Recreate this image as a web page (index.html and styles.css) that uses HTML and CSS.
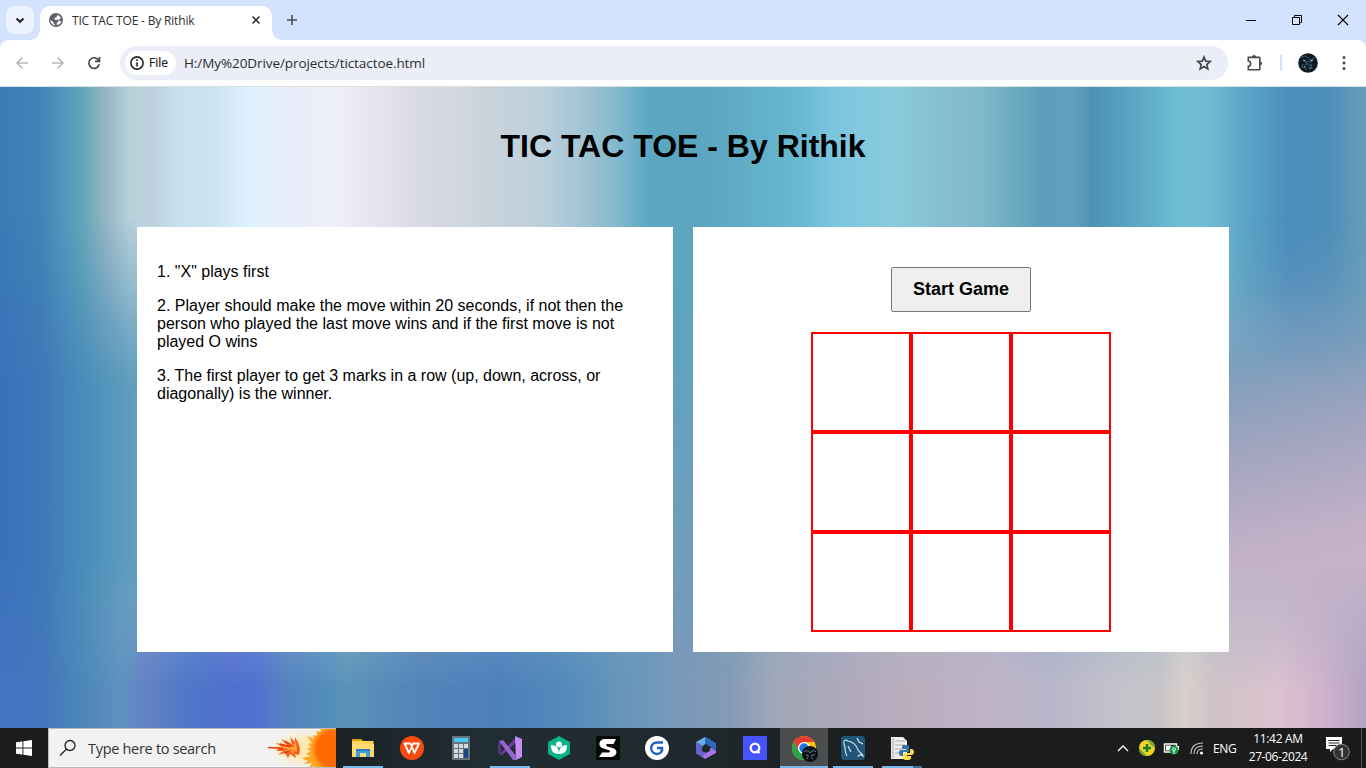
FILE: index.html
```html
<!DOCTYPE html>
<html lang="en">
<head>
<meta charset="utf-8">
<title>TIC TAC TOE - By Rithik</title>
<link rel="stylesheet" href="styles.css">
</head>
<body>
<header class="tabstrip">
  <button class="tab-search" aria-label="Search tabs"><svg width="28" height="28" viewBox="0 0 28 28"><path d="M10.5 12.5l3.5 3.3 3.5-3.3" fill="none" stroke="#202124" stroke-width="2"/></svg></button>
  <div class="tab">
    <svg class="globe" width="14" height="14" viewBox="0 0 14 14"><circle cx="7" cy="7" r="7" fill="#5f6368"/><path d="M8.7 1.7c-.8 1.2.2 1.7-1.5 2.2-1.5.3-.7 1.2-1.7 1.6v1.3h3.2c1 0 1.2 1.7.3 2.2l-1.2.5v2.400c2-.1 3.900-1.300 4.700-3.200-1.100-1.200-2.500-.6-3-2 1.300-.8 1.900-1.100 2.600-1.900M1.500 7l3 2.300v1.300l1.400 1v.9C3 12 1.300 9.700 1.500 7z" fill="#fff"/></svg>
    <span class="tab-title">TIC TAC TOE - By Rithik</span>
    <svg class="tab-close" width="10" height="10" viewBox="0 0 10 10"><path d="M1.500 1.500l7 7m0-7l-7 7" stroke="#27292c" stroke-width="1.500"/></svg>
  </div>
  <svg class="new-tab" width="12" height="12" viewBox="0 0 12 12"><path d="M6 1v10M1 6h10" stroke="#474b50" stroke-width="1.600"/></svg>
  <div class="window-controls">
    <svg width="12" height="12" viewBox="0 0 12 12"><path d="M1 6.500h10" stroke="#000"/></svg>
    <svg width="12" height="12" viewBox="0 0 12 12"><path d="M1.500 3.500h7v7h-7zM3.500 3V1.500h7v7H9" fill="none" stroke="#000"/></svg>
    <svg width="12" height="12" viewBox="0 0 12 12"><path d="M1 1l10 10m0-10L1 11" stroke="#000" stroke-width="1.100"/></svg>
  </div>
</header>
<nav class="toolbar">
  <svg class="nav-icon" width="14" height="14" viewBox="0 0 14 14"><path d="M13 7H2m5.500-5.500L2 7l5.500 5.500" fill="none" stroke="#b4b6b9" stroke-width="1.600"/></svg>
  <svg class="nav-icon" width="14" height="14" viewBox="0 0 14 14"><path d="M1 7h11M6.500 1.500L12 7l-5.500 5.500" fill="none" stroke="#b4b6b9" stroke-width="1.600"/></svg>
  <svg class="nav-icon" width="14" height="14" viewBox="0 0 14 14"><path d="M12.300 8.300A5.300 5.300 0 1 1 11.600 4.200M12.500 1v4.300H8" fill="none" stroke="#45494d" stroke-width="1.700"/></svg>
  <div class="address">
    <span class="file-chip"><svg width="14" height="14" viewBox="0 0 14 14"><circle cx="7" cy="7" r="6.100" fill="none" stroke="#24262a" stroke-width="1.600"/><path d="M7 6.200v4.300M7 3.300v1.700" stroke="#24262a" stroke-width="1.600"/></svg><span class="chip-text">File</span></span>
    <span class="url">H:/My%20Drive/projects/tictactoe.html</span>
    <svg class="star" width="16" height="16" viewBox="0 0 16 16"><path d="M8 2l1.700 4.100 4.500.4-3.400 3 1 4.400L8 11.500l-3.800 2.400 1-4.400-3.400-3 4.500-.4z" fill="none" stroke="#45494d" stroke-width="1.700"/></svg>
  </div>
  <svg class="puzzle" width="18" height="18" viewBox="0 0 18 18"><path d="M2.300 3.400h10.900q.6 0 .6.600v11.200q0 .6-.6.600H2.300V12.300c3-.2 3-5 0-5.300z" fill="none" stroke="#45494d" stroke-width="1.600"/><path d="M6 3c0-2.800 4-2.800 4 0M14.200 7.600c2.500 0 2.500 3.800 0 3.800" fill="#45494d"/></svg>
  <span class="divider"></span>
  <svg class="avatar" width="20" height="20" viewBox="0 0 20 20"><circle cx="10" cy="10" r="9.800" fill="#101a23"/><path d="M3 5q4-4 7 0t7-1M5 7q3 4 5 1 2 3 5-1M7 13l2-3 2 3 2-2 1 5M5 11l-1 4M8 17v-3" fill="none" stroke="#3b6579" stroke-width="1"/><path d="M5 7l3 1M12 8l3-1M6 15l1-2M12 16v-2" stroke="#9fb0b7" stroke-width=".9"/></svg>
  <svg class="dots" width="4" height="16" viewBox="0 0 4 16"><g fill="#45494d"><circle cx="2" cy="2.500" r="1.500"/><circle cx="2" cy="8" r="1.500"/><circle cx="2" cy="13.500" r="1.500"/></g></svg>
</nav>
<main class="page">
  <h1 class="heading">TIC TAC TOE - By Rithik</h1>
  <div class="panels">
    <section class="panel rules">
      <p>1. "X" plays first</p>
      <p>2. Player should make the move within 20 seconds, if not then the person who played the last move wins and if the first move is not played O wins</p>
      <p>3. The first player to get 3 marks in a row (up, down, across, or diagonally) is the winner.</p>
    </section>
    <section class="panel game">
      <button class="start">Start Game</button>
      <div class="board"><i class="cell"></i><i class="cell"></i><i class="cell"></i><i class="cell"></i><i class="cell"></i><i class="cell"></i><i class="cell"></i><i class="cell"></i><i class="cell"></i></div>
    </section>
  </div>
</main>
<footer class="taskbar">
  <div class="start-menu"><svg width="16" height="16" viewBox="0 0 16 16"><path d="M0 2.300L6.500 1.400V7.500H0zM7.400 1.200L16 0v7.500H7.400zM0 8.400h6.500v6.200L0 13.700zM7.400 8.400H16V16l-8.600-1.200z" fill="#fff"/></svg></div>
  <div class="search">
    <svg width="18" height="18" viewBox="0 0 18 18"><circle cx="11" cy="6.500" r="5" fill="none" stroke="#222" stroke-width="1.300"/><path d="M7.500 10L1 16.500" stroke="#222" stroke-width="1.300"/></svg>
    <span class="search-text">Type here to search</span>
    <svg class="sun" width="70" height="38" viewBox="0 0 70 38">
      <defs><radialGradient id="glow"><stop offset=".4" stop-color="#ffe9b0"/><stop offset="1" stop-color="#f2f2f2"/></radialGradient><radialGradient id="core"><stop offset=".78" stop-color="#ff6a00"/><stop offset="1" stop-color="#ff9b22"/></radialGradient></defs>
      <ellipse cx="40" cy="20" rx="38" ry="19" fill="url(#glow)"/>
      <path d="M70 0H54l2 3-6-1 2 5-5-1 1 4-7-3 5 7-4 1 3 3-4 2 4 2-5 3 5 2-9 2 6 3-4 3 8-1-3 5 6-2v4h21z" fill="#ffa51f"/>
      <circle cx="68" cy="20" r="22" fill="url(#core)"/>
      <path d="M1 18l15 0-6-4 11 2-6-6 11 5-2-7 5 5 0-5q7 10 4 18l-4-1 1 4-6-4-2 4-3-5-7 2 5-4-7 0 4-3z" fill="#fa5a20"/>
      <path d="M8 18l15 2-7 2 8 0 4 4-1-5 4 2-1-11-2 4-7-4 5 5z" fill="#ffad32"/>
      <path d="M2 18.500l15 1M14 15l11 3M19 12l9 6M18 24l8-3" stroke="#e83b12" stroke-width="1.300" fill="none"/>
    </svg>
  </div>
  <div class="apps">
    <div class="app open"><svg width="24" height="24" viewBox="0 0 24 24"><path d="M1 3h9l2 2h10.500v16H1z" fill="#ffd35d"/><path d="M1 3h9l1.500 2H1z" fill="#dda00d"/><path d="M1 8h22v13H1z" fill="#ffda70"/><path d="M5 13h14v8h-4v-4H9v4H5z" fill="#3f9ce0"/><path d="M5 13h14v2H5z" fill="#267bc1"/></svg></div>
    <div class="app"><svg width="24" height="24" viewBox="0 0 24 24"><circle cx="12" cy="12" r="12" fill="#fb4a10"/><path d="M4.500 7.500h6L14.500 17 19 7.500h-6L9 17z" fill="none" stroke="#fff" stroke-width="1.800" stroke-linejoin="round"/></svg></div>
    <div class="app"><svg width="24" height="24" viewBox="0 0 24 24"><path d="M3 0h18v24H3z" fill="#67737c"/><path d="M5 2h14v4H5z" fill="#49c9ef"/><path d="M5 8h4v4H5zm5 0h4v4h-4zm5 0h4v4h-4zM5 13h4v4H5zm5 0h4v4h-4zM5 18h4v4H5zm5 0h4v4h-4z" fill="#d4d9dc"/><path d="M15 13h4v9h-4z" fill="#164a86"/></svg></div>
    <div class="app open"><svg width="24" height="24" viewBox="0 0 24 24"><path d="M0 6l3-1v14l-3-2z" fill="#543282"/><path d="M2 18L18 1v6L4 19z" fill="#6a3c9b"/><path d="M17 0l7 3v18l-6 3z" fill="#c58df4"/><path d="M1 5l4-1 14 17-1 3h-3z" fill="#9565cf"/></svg></div>
    <div class="app"><svg width="24" height="24" viewBox="0 0 24 24"><path d="M12 0l11 6v12l-11 6-11-6V6z" fill="#08b28a"/><circle cx="12" cy="8.500" r="3" fill="#fff"/><path d="M4 9c5 0 8 3 8 9-6 0-8-3-8-9m16 0c-5 0-8 3-8 9 6 0 8-3 8-9" fill="#fff"/></svg></div>
    <div class="app"><svg width="24" height="24" viewBox="0 0 24 24"><path d="M0 0h24v24H0z" fill="#080808"/><path d="M8.500 3H20l-2.500 5H11q-2 1 0 2.200l7 2.300c5 3 1.500 8.500-3 8.500H3l3-4.500h7q2-1 0-2.200l-7-2.300C1 9 4 3 8.500 3z" fill="#fff"/><path d="M11 8h5l2 4.500z" fill="#111"/></svg></div>
    <div class="app"><svg width="24" height="24" viewBox="0 0 24 24"><circle cx="12" cy="12" r="12" fill="#fff"/><path d="M18 6.500H12a5.700 5.700 0 1 0 5 8.200V12h-5" fill="none" stroke="#2262bc" stroke-width="2.500"/></svg></div>
    <div class="app"><svg width="24" height="24" viewBox="0 0 24 24"><path d="M11 1L2 6v11l6 3V11l4-4 5 2V4z" fill="#67aeea"/><path d="M11 1l11 6v10l-5 2v-8l-6-3z" fill="#2d68bd"/><path d="M2 17l9-2 6-3 5 3v2l-11 6z" fill="#a873e4"/><path d="M2 6l6 3v6l4 3-4 3-6-4z" fill="#6564c9"/><path d="M12 8l4 3v4l-4 2-4-2v-4z" fill="#21282c"/></svg></div>
    <div class="app"><svg width="24" height="24" viewBox="0 0 24 24"><path d="M0 0h24v24H0z" fill="#4653ff"/><circle cx="12" cy="12" r="4.300" fill="none" stroke="#fff" stroke-width="2.300"/><path d="M13.500 14.500l3 2.500" stroke="#fff" stroke-width="2.300"/></svg></div>
    <div class="app open active"><svg class="chrome" width="28" height="28" viewBox="0 0 28 28"><circle cx="12" cy="13" r="12" fill="#fbc116"/><path d="M1.600 7A12 12 0 0 1 22.400 7H12l-5 9z" fill="#e43d30"/><path d="M1.600 7A12 12 0 0 0 12 25l5-9-10 0z" fill="#2ba24c"/><circle cx="12" cy="13" r="6" fill="#fff"/><circle cx="12" cy="13" r="4.700" fill="#1a73e8"/><circle cx="18" cy="19" r="8" fill="#0b1118"/><path d="M12 17q4-3 6 1 3-4 6-1M14 20l3 1m2 0l4-2m-8 5l1-2m4 2v-2" stroke="#6b7f87" fill="none"/></svg></div>
    <div class="app open"><svg width="24" height="24" viewBox="0 0 24 24"><rect width="24" height="24" rx="3" fill="#205578"/><path d="M6 20c-3-5-1-8-3-12-1-3 1-5 4-3 7 1 9 6 10 9 1 2 4 3 5 6-3-2-5-1-5 1M7 10l3 6M16 2l2 4 4 2" fill="none" stroke="#d5e3eb" stroke-width="1.200"/></svg></div>
    <div class="app open stack"><svg width="24" height="24" viewBox="0 0 24 24"><path d="M1 1h12l4 4v18H1z" fill="#eee"/><path d="M3 2v20M5 5h10M5 9h10M5 13h8M5 17h8" stroke="#aaa"/><path d="M13 9h4q2 0 2 2v4q0 1-1 1h-5v4h-2q-2 0-2-3t2-3h5v-1h-4v-2q0-2 1-2z" fill="#3776aa"/><path d="M20 13h1q3 0 3 3t-3 3h-4v1h4v2q0 2-4 2t-4-2v-3q0-2 2-2h5z" fill="#ffdc45"/></svg></div>
  </div>
  <div class="tray">
    <svg class="caret" width="14" height="10" viewBox="0 0 14 10"><path d="M2 8l5-5 5 5" fill="none" stroke="#fff" stroke-width="1.300"/></svg>
    <svg class="plus" width="16" height="16" viewBox="0 0 16 16"><circle cx="8" cy="8" r="8" fill="#f5d229"/><path d="M8 0q8 0 8 8l-4-3zM0 8q0 8 8 8L4 12z" fill="#69ac35"/><path d="M8 4v8M4 8h8" stroke="#128229" stroke-width="2.500"/></svg>
    <svg class="battery" width="17" height="14" viewBox="0 0 17 14"><path d="M1.500 3h12v8h-12z" fill="none" stroke="#fff" stroke-width="1.400"/><path d="M3 4.500h5v5H3zM14 5h2v4h-2z" fill="#fff"/><circle cx="11" cy="9" r="4.500" fill="#179947"/><path d="M11 13V9M9.500 8q1.500-3 3 0-.5 2-1.500 2t-1.500-2" stroke="#fff" fill="none"/></svg>
    <svg class="wifi" width="14" height="14" viewBox="0 0 14 14"><g fill="none" stroke="#c4c4c4" stroke-width="1.200"><path d="M1 13Q1 2 13 2M4 13q0-8 9-8M7 13q0-5 6-5"/></g><circle cx="11.500" cy="12" r="1.600" fill="#fff"/></svg>
    <span class="lang">ENG</span>
    <div class="clock"><span class="time">11:42 AM</span><span class="date">27-06-2024</span></div>
    <svg class="notice" width="26" height="26" viewBox="0 0 26 26"><path d="M1 2h16v12H8l-3 3v-3H1z" fill="#fff"/><path d="M3.500 5.500h11M3.500 8h11M3.500 10.500h8" stroke="#222"/><circle cx="16.500" cy="17" r="7.800" fill="#333" stroke="#888"/><text class="badge" x="13" y="21.500">1</text></svg>
    <span class="peek"></span>
  </div>
</footer>
</body>
</html>
```

FILE: styles.css
```css
* { box-sizing: border-box; }
body { margin: 0; width: 1366px; height: 768px; overflow: hidden; display: flex; flex-direction: column; font-family: "Liberation Sans", Arial, sans-serif; }
svg { display: block; flex: none; }
button { padding: 0; border: 0; }

.tabstrip { height: 40px; flex: none; background: #d3e3fd; display: flex; align-items: flex-start; }
.tab-search { width: 28px; height: 28px; margin: 6px 6px 0; border-radius: 9px; background: #edf3fe; }
.tab { position: relative; display: flex; align-items: center; width: 232px; height: 34px; margin-top: 6px; padding: 0 11px 6px 9px; border-radius: 10px 10px 0 0; background: #fff; }
.tab::before, .tab::after { content: ""; position: absolute; bottom: 0; width: 10px; height: 10px; }
.tab::before { left: -10px; background: radial-gradient(circle at 0 0, transparent 9.5px, #fff 10px); }
.tab::after { right: -10px; background: radial-gradient(circle at 100% 0, transparent 9.5px, #fff 10px); }
.tab-title { margin-left: 9px; font: 12px "Open Sans", sans-serif; letter-spacing: -.18px; color: #2c2d31; white-space: nowrap; }
.tab-close { margin-left: auto; }
.new-tab { margin: 14px 0 0 14px; }
.window-controls { display: flex; gap: 34px; margin: 14px 17px 0 auto; }

.toolbar { position: relative; height: 47px; flex: none; display: flex; align-items: center; padding: 0 20px 1px 15px; background: #fff; border-bottom: 1px solid #dcdfe0; }
.toolbar::before, .toolbar::after { content: ""; position: absolute; top: 0; width: 8px; height: 8px; }
.toolbar::before { left: 0; background: radial-gradient(circle at 100% 100%, transparent 7.5px, #d3e3fd 8px); }
.toolbar::after { right: 0; background: radial-gradient(circle at 0 100%, transparent 7.5px, #d3e3fd 8px); }
.nav-icon { margin-right: 22px; }
.address { width: 1108px; height: 34px; margin-left: -3px; padding: 0 16px 0 5px; border-radius: 17px; background: #ebeef8; display: flex; align-items: center; }
.file-chip { width: 51px; height: 24px; padding-left: 5px; border-radius: 12px; background: #fff; display: flex; align-items: center; gap: 5px; }
.chip-text { font: 12px "Open Sans", sans-serif; color: #202124; -webkit-text-stroke: .2px #202124; }
.url { margin-left: 8px; font: 13.5px "Open Sans", sans-serif; letter-spacing: -.08px; color: #2b2d31; white-space: nowrap; }
.star { margin-left: auto; }
.puzzle { margin-left: 18px; }
.divider { width: 2px; height: 16px; margin-left: 16px; background: #d3e3fd; }
.avatar { margin-left: 16px; }
.dots { margin-left: 24px; }

.page { position: relative; isolation: isolate; flex: none; height: 641px; padding-top: 38px;
  background: linear-gradient(90deg, #3a7bb8 0, #4084b6 40px, #5599bd 66px, #5da5b8 80px, #94b5c5 105px, #b8d0da 130px, #bfd2df 155px, #c9e1ee 180px, #cce3f0 215px, #dff2ff 250px, #e6edf8 290px, #efeff9 335px, #e8e5ef 370px, #d9dae5 420px, #cbd4dd 480px, #bdd0dc 540px, #a5c5d5 580px, #85b9cd 615px, #5ba7c2 650px, #5ca5bf 700px, #66b7cf 795px, #7cc6df 835px, #8acbdc 895px, #86bfd2 940px, #80b9ca 980px, #5d9fbb 1040px, #629fc0 1075px, #4e91b4 1092px, #59a4c3 1130px, #6fbed2 1180px, #72bcd4 1205px, #58a3c5 1250px, #4b8dbd 1290px, #4f90ba 1330px, #659db9 1366px); }
.page::before, .page::after { content: ""; position: absolute; inset: 0; z-index: -1; }
.page::before { -webkit-mask-image: linear-gradient(transparent 200px, #000 600px); mask-image: linear-gradient(transparent 200px, #000 600px);
  background: linear-gradient(90deg, #4475c5 0, #4475bf 40px, #4b87b8 80px, #6090c0 120px, #6280c5 150px, #4d77c8 190px, #5270cc 220px, #5070cf 255px, #5581c0 285px, #538fbb 330px, #5b93b7 345px, #5284b9 420px, #4d80ba 500px, #5289bb 560px, #6595b9 620px, #7898ba 670px, #849bb5 730px, #a0a8b8 775px, #aea8bb 840px, #b9aebe 910px, #bfb4c8 1000px, #b8b6ca 1050px, #c3c1cc 1110px, #c7c4c8 1160px, #d9cfcc 1185px, #cfc2c8 1215px, #dcc3cf 1280px, #d2b4ce 1320px, #b3a3c3 1366px); }
/* left: the pale bands fade to blue below the title; right: pink rises towards the edge */
.page::after {
  background:
    linear-gradient(167deg, #6098ba00 70px, #7c9dbc 270px, #a6a6c0 370px, #c3b1c8 460px, #cdb6ca 540px, #d4bdca 640px) 1229px 0 / 137px 100% no-repeat,
    linear-gradient(90deg, #3b70bb 0, #4079b8 45px, #4c8fba 90px, #609fbc 137px) 0 0 / 137px 100% no-repeat;
  -webkit-mask-image: linear-gradient(transparent 130px, #000 300px 470px, transparent 600px);
  mask-image: linear-gradient(transparent 130px, #000 300px 470px, transparent 600px); }
.heading { margin: 0; height: 42px; text-align: center; font-size: 32px; line-height: 42px; color: #000; }
.panels { display: flex; justify-content: center; gap: 20px; margin-top: 60px; }
.panel { width: 536px; height: 425px; background: #fff; }
.rules { padding: 20px; font-size: 16px; line-height: 18px; color: #000; }
.rules p { margin: 16px 0; }
.game { display: flex; flex-direction: column; align-items: center; padding-top: 40px; }
.start { width: 140px; height: 45px; border: 1px solid #767676; border-radius: 2px; background: #efefef; font: bold 18px "Liberation Sans", Arial, sans-serif; color: #000; }
.board { display: grid; grid-template-columns: repeat(3, 100px); grid-auto-rows: 100px; margin-top: 20px; }
.cell { border: 2px solid red; }

.taskbar { height: 40px; flex: none; display: flex; background: linear-gradient(90deg, #1c1c1c 0, #1c2226 330px, #202d33 480px, #20292d 700px, #1b1d1e 860px, #1b1b1b); }
.start-menu { width: 48px; display: flex; align-items: center; justify-content: center; }
.search { width: 288px; height: 40px; border: 1px solid #bababa; border-right: 0; background: #f2f2f2; display: flex; align-items: center; padding-left: 10px; }
.search-text { margin-left: 11px; font: 14.5px "Open Sans", sans-serif; letter-spacing: -.3px; color: #333; white-space: nowrap; }
.sun { margin-left: auto; }
.apps { display: flex; gap: 1px; margin-left: 3px; }
.app { position: relative; width: 48px; height: 40px; display: flex; align-items: center; justify-content: center; }
.open::after { content: ""; position: absolute; left: 4px; right: 4px; bottom: 0; height: 2px; background: #76b9ed; }
.active { background: #4b4d4e; }
.chrome { margin: 1px 0 0 4px; }
.active::after { left: 0; right: 0; }
.stack::after { background: linear-gradient(90deg, #76b9ed 31px, #426e91 31px); }
.tray { margin-left: auto; display: flex; align-items: center; color: #fff; font: 12px "Open Sans", sans-serif; }
.plus { margin-left: 9px; }
.battery { margin-left: 8px; }
.wifi { margin-left: 10px; }
.lang { width: 24px; margin-left: 9px; letter-spacing: -.3px; }
.clock { width: 60px; margin-left: 11px; display: flex; flex-direction: column; align-items: center; line-height: 18px; letter-spacing: -.4px; white-space: nowrap; }
.time { letter-spacing: -.3px; }
.notice { margin-left: 17px; }
.badge { font: 13px "Open Sans", sans-serif; fill: #fff; }
.peek { width: 1px; height: 40px; margin: 0 4px 0 10px; background: #555; }
```
